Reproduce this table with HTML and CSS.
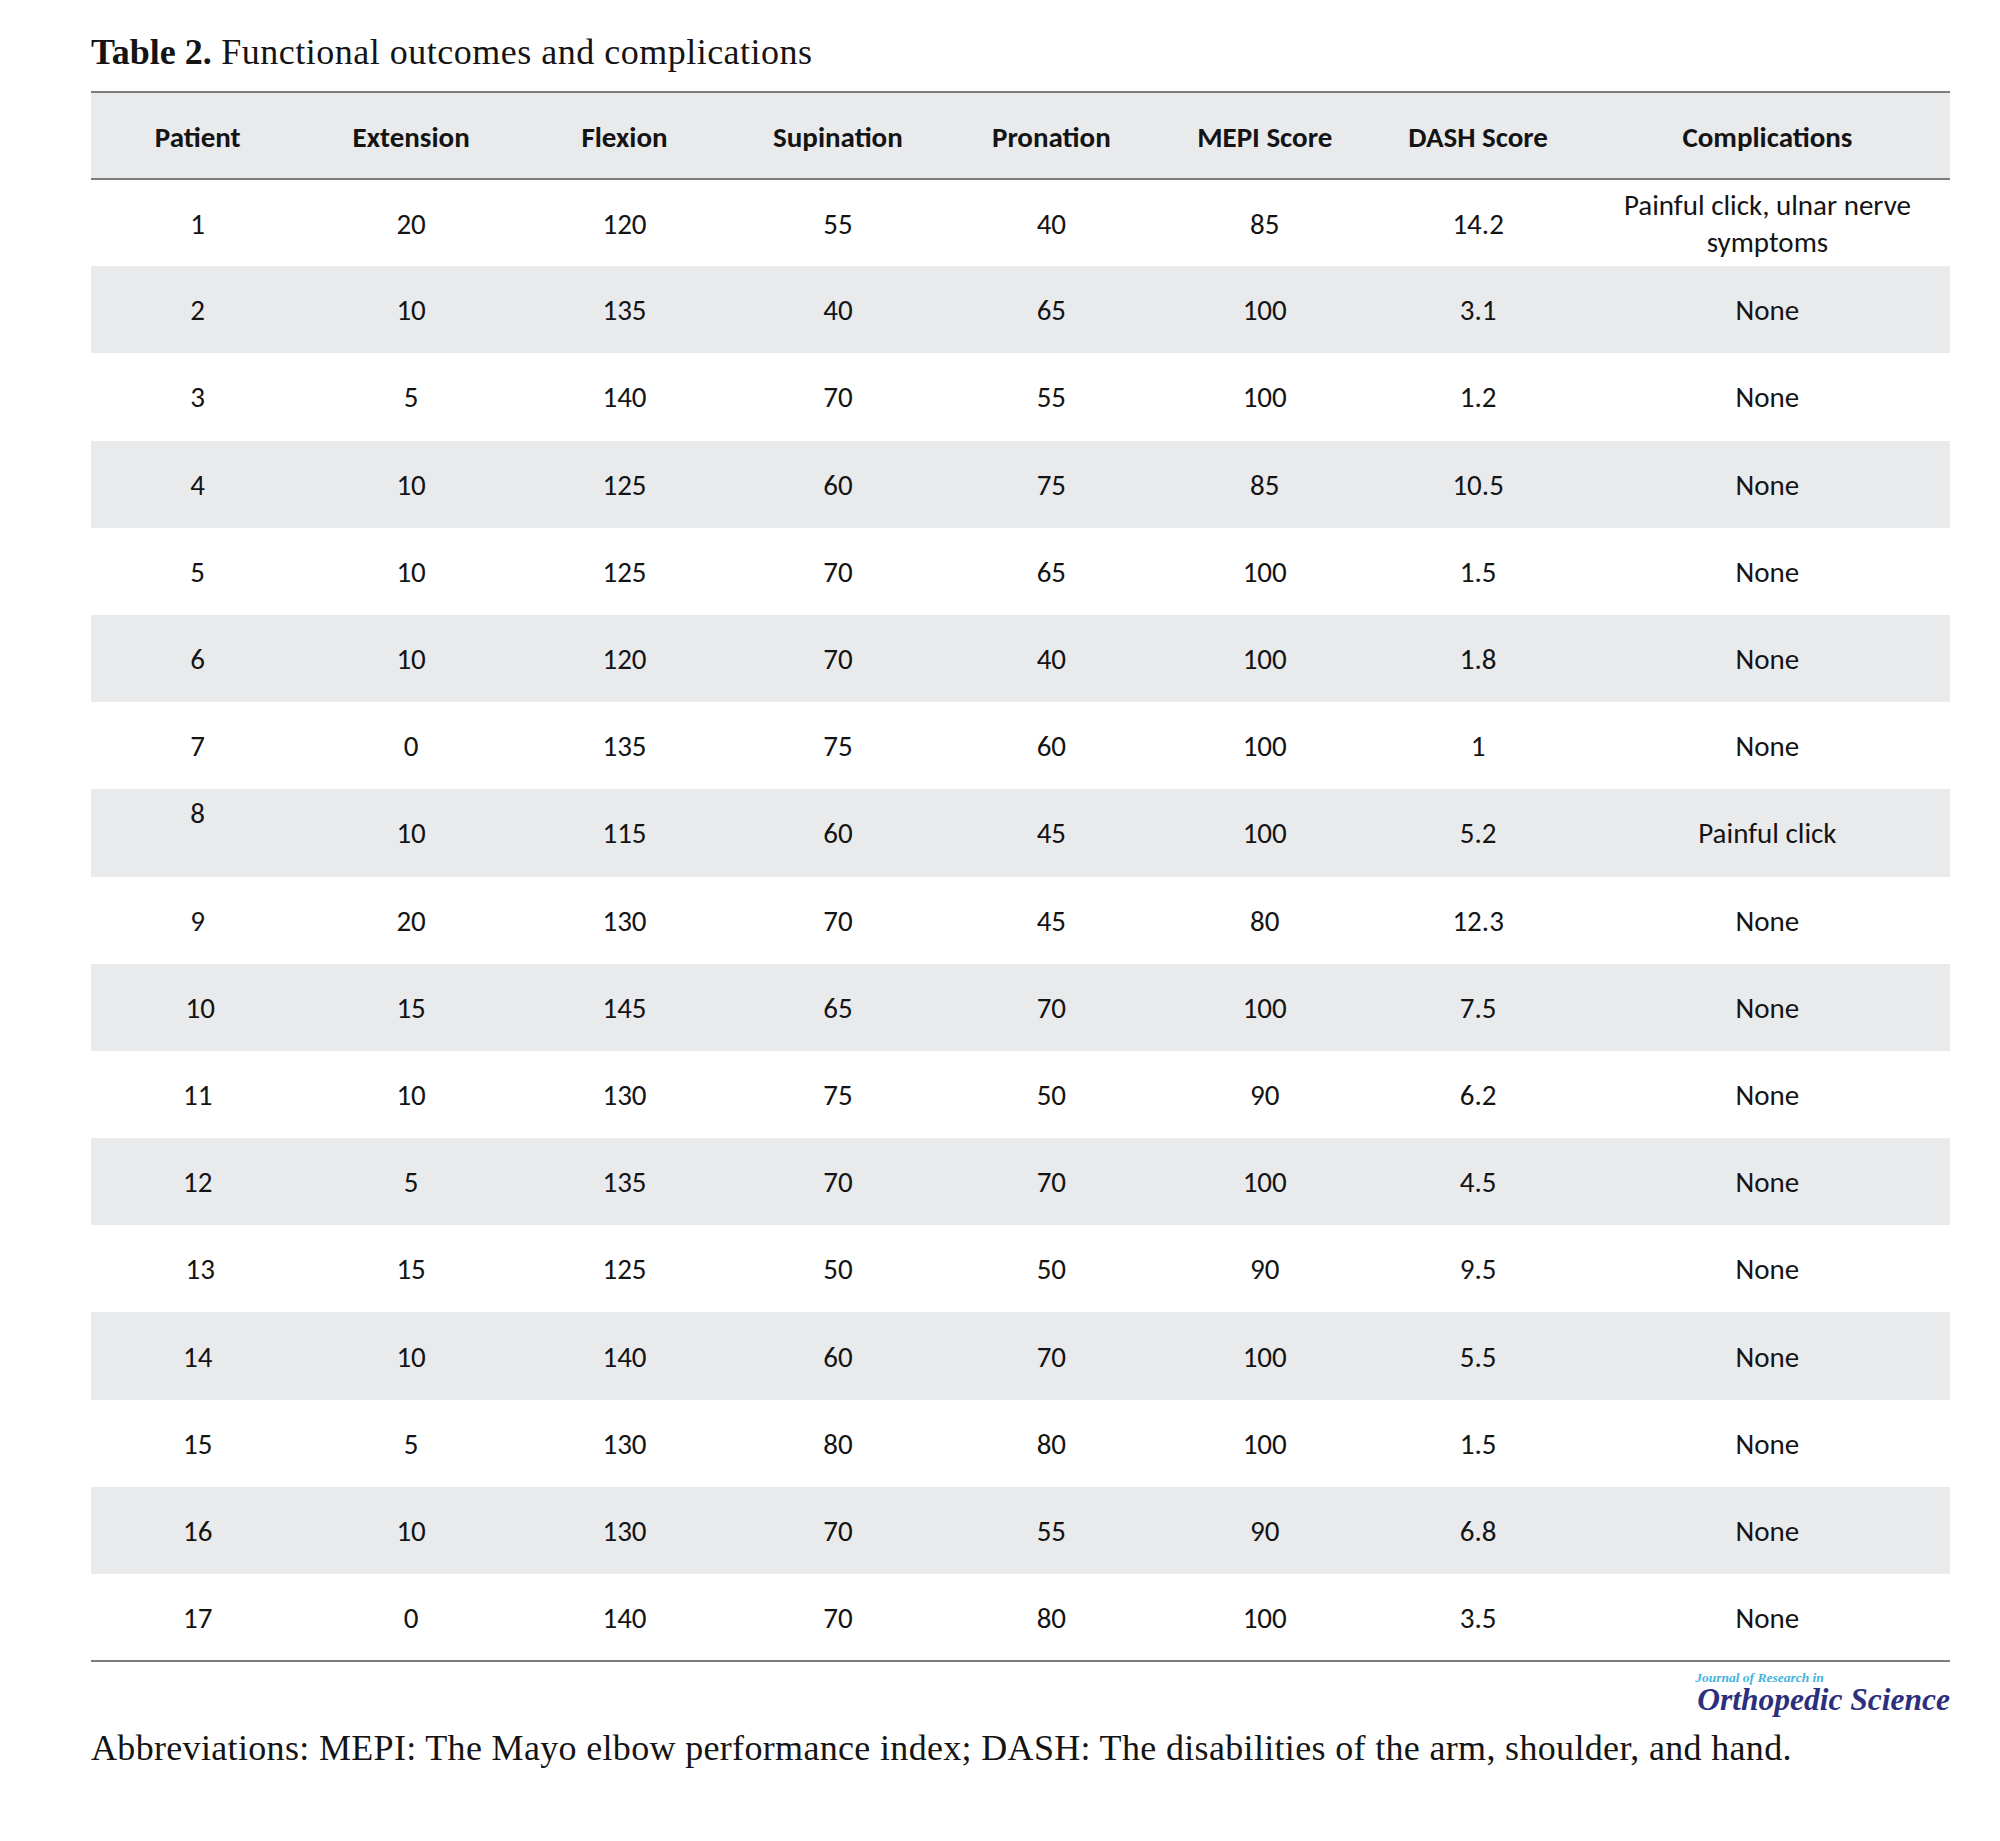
FILE: index.html
```html
<!DOCTYPE html>
<html>
<head>
<meta charset="utf-8">
<link rel="stylesheet" href="styles.css">
</head>
<body>
<div class="page">
  <div class="title"><b>Table 2.</b> Functional outcomes and complications</div>
  <table class="data">
    <colgroup>
      <col class="c"><col class="c"><col class="c"><col class="c"><col class="c"><col class="c"><col class="c"><col class="wide">
    </colgroup>
    <thead>
      <tr><th>Patient</th><th>Extension</th><th>Flexion</th><th>Supination</th><th>Pronation</th><th>MEPI Score</th><th>DASH Score</th><th>Complications</th></tr>
    </thead>
    <tbody>
      <tr><td>1</td><td>20</td><td>120</td><td>55</td><td>40</td><td>85</td><td>14.2</td><td class="two">Painful click, ulnar nerve<br>symptoms</td></tr>
      <tr><td>2</td><td>10</td><td>135</td><td>40</td><td>65</td><td>100</td><td>3.1</td><td>None</td></tr>
      <tr><td>3</td><td>5</td><td>140</td><td>70</td><td>55</td><td>100</td><td>1.2</td><td>None</td></tr>
      <tr><td>4</td><td>10</td><td>125</td><td>60</td><td>75</td><td>85</td><td>10.5</td><td>None</td></tr>
      <tr><td>5</td><td>10</td><td>125</td><td>70</td><td>65</td><td>100</td><td>1.5</td><td>None</td></tr>
      <tr><td>6</td><td>10</td><td>120</td><td>70</td><td>40</td><td>100</td><td>1.8</td><td>None</td></tr>
      <tr><td>7</td><td>0</td><td>135</td><td>75</td><td>60</td><td>100</td><td>1</td><td>None</td></tr>
      <tr><td class="raised">8</td><td>10</td><td>115</td><td>60</td><td>45</td><td>100</td><td>5.2</td><td>Painful click</td></tr>
      <tr><td>9</td><td>20</td><td>130</td><td>70</td><td>45</td><td>80</td><td>12.3</td><td>None</td></tr>
      <tr><td class="nudge">10</td><td>15</td><td>145</td><td>65</td><td>70</td><td>100</td><td>7.5</td><td>None</td></tr>
      <tr><td>11</td><td>10</td><td>130</td><td>75</td><td>50</td><td>90</td><td>6.2</td><td>None</td></tr>
      <tr><td>12</td><td>5</td><td>135</td><td>70</td><td>70</td><td>100</td><td>4.5</td><td>None</td></tr>
      <tr><td class="nudge">13</td><td>15</td><td>125</td><td>50</td><td>50</td><td>90</td><td>9.5</td><td>None</td></tr>
      <tr><td>14</td><td>10</td><td>140</td><td>60</td><td>70</td><td>100</td><td>5.5</td><td>None</td></tr>
      <tr><td>15</td><td>5</td><td>130</td><td>80</td><td>80</td><td>100</td><td>1.5</td><td>None</td></tr>
      <tr><td>16</td><td>10</td><td>130</td><td>70</td><td>55</td><td>90</td><td>6.8</td><td>None</td></tr>
      <tr><td>17</td><td>0</td><td>140</td><td>70</td><td>80</td><td>100</td><td>3.5</td><td>None</td></tr>
    </tbody>
  </table>
  <div class="brand-row">
    <div class="brand">
      <div class="brand-small">Journal of Research in</div>
      <div class="brand-big">Orthopedic Science</div>
    </div>
  </div>
  <div class="abbr">Abbreviations: MEPI: The Mayo elbow performance index; DASH: The disabilities of the arm, shoulder, and hand.</div>
</div>
</body>
</html>
```
FILE: styles.css
```css
html, body {
  margin: 0;
  padding: 0;
  background: #ffffff;
}

.page {
  width: 1859px;
  padding: 32px 0 0 91px;
  color: #141414;
}

.title {
  font-family: "Liberation Serif", "Times New Roman", serif;
  font-size: 36px;
  line-height: 40px;
  letter-spacing: 0.5px;
  margin-bottom: 19px;
}

.title b {
  font-weight: bold;
  letter-spacing: 0;
}

.data {
  width: 1859px;
  border-collapse: collapse;
  table-layout: fixed;
  font-family: Carlito, Calibri, Lato, sans-serif;
  font-size: 29px;
  color: #141414;
}

.data col.c {
  width: 213.4px;
}

.data col.wide {
  width: 365px;
}

.data thead tr {
  background: #e9eaec;
  height: 87px;
}

.data th {
  font-weight: bold;
  text-align: center;
  vertical-align: middle;
  padding: 2px 0 0 0;
  border-top: 2px solid #7c7c7c;
  border-bottom: 2px solid #7c7c7c;
}

.data tbody tr {
  height: 87.2px;
}

.data tbody tr:nth-child(even) {
  background: #e9eaec;
}

.data tbody tr:last-child td {
  border-bottom: 2px solid #7c7c7c;
}

.data td {
  text-align: center;
  vertical-align: middle;
  padding: 2px 0 0 0;
  line-height: 37px;
}

.data td.raised {
  vertical-align: top;
  padding-top: 6px;
}

.data td.nudge {
  padding-left: 5px;
}

.brand-row {
  display: flex;
  justify-content: flex-end;
  width: 1859px;
  margin-top: 8px;
}

.brand {
  display: flex;
  flex-direction: column;
  font-family: "Liberation Serif", "Times New Roman", serif;
  font-style: italic;
  font-weight: bold;
}

.brand-small {
  font-size: 13.5px;
  line-height: 15px;
  color: #42b4df;
}

.brand-big {
  font-size: 31.5px;
  line-height: 30px;
  color: #2c2f7d;
  padding-left: 2px;
}

.abbr {
  font-family: "Liberation Serif", "Times New Roman", serif;
  font-size: 36px;
  line-height: 40px;
  letter-spacing: 0.33px;
  margin-top: 13px;
}
```
